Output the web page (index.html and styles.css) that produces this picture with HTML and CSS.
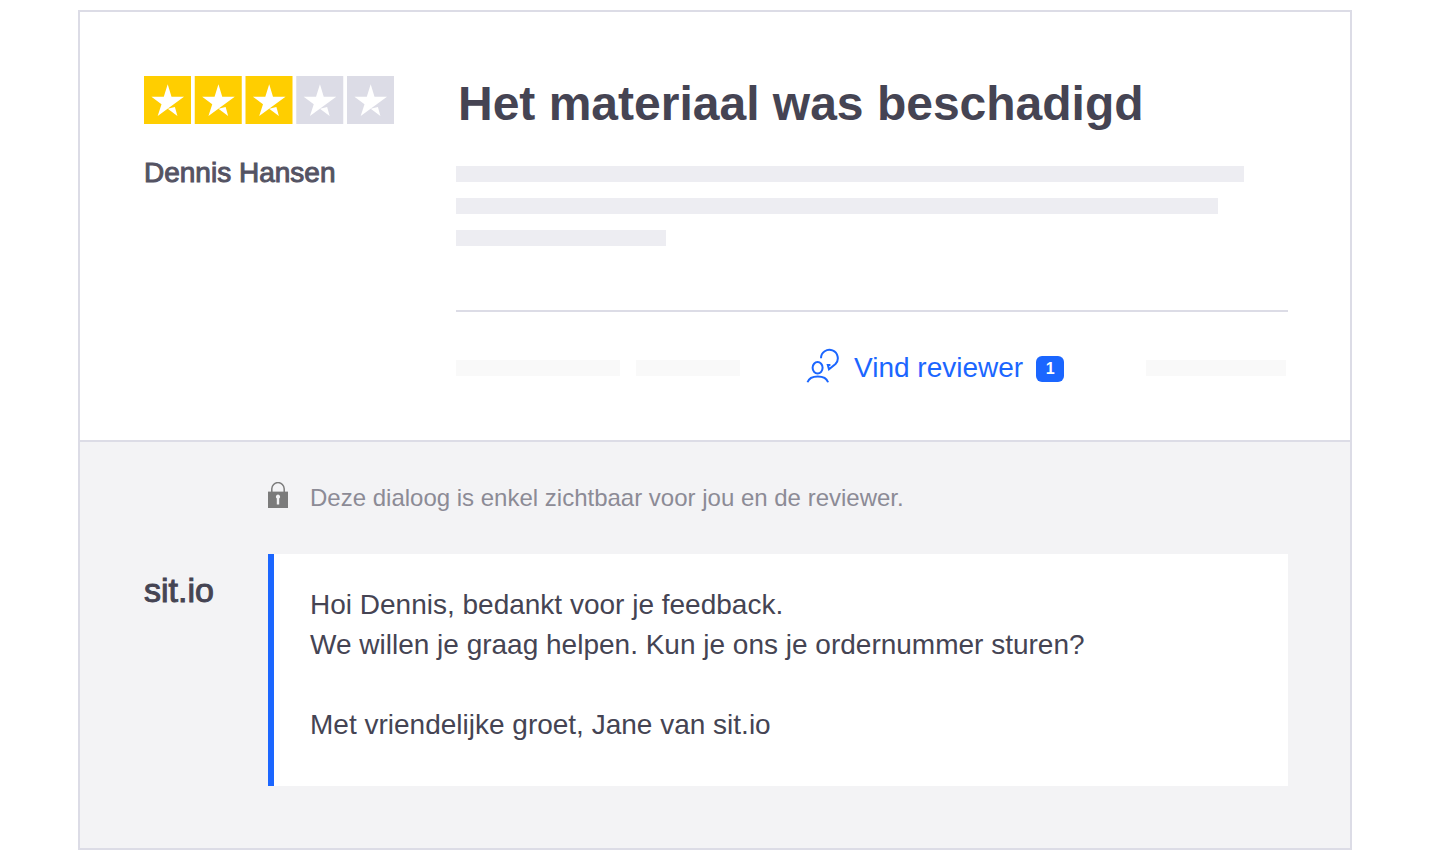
FILE: index.html
```html
<!DOCTYPE html>
<html lang="nl">
<head>
<meta charset="utf-8">
<meta name="viewport" content="width=device-width, initial-scale=1">
<title>Vind reviewer</title>
<link rel="stylesheet" href="styles.css">
</head>
<body>
<main class="card">
  <article class="review">
    <div class="reviewer">
      <svg class="stars" viewBox="0 0 250 48" role="img" aria-label="3 van 5 sterren">
        <defs>
          <g id="star">
            <path d="M0 0H47V48H0Z"/>
            <path fill="#fff" d="M23.7 8.3L27.5 20.7H40L13.7 40L17.5 28.2L7.4 20.7H19.8Z"/>
            <path fill="#fff" d="M23.7 32.7L30.9 31L33.4 40Z"/>
          </g>
        </defs>
        <g fill="#ffce00">
          <use href="#star"/>
          <use href="#star" x="50.75"/>
          <use href="#star" x="101.5"/>
        </g>
        <g fill="#dcdce6">
          <use href="#star" x="152.25"/>
          <use href="#star" x="203"/>
        </g>
      </svg>
      <p class="name">Dennis Hansen</p>
    </div>
    <div class="content">
      <h1 class="title">Het materiaal was beschadigd</h1>
      <div class="lines">
        <span class="line line-long"></span>
        <span class="line line-medium"></span>
        <span class="line line-short"></span>
      </div>
      <div class="actions">
        <span class="stub stub-large"></span>
        <span class="stub stub-small"></span>
        <a class="find" href="#dialoog">
          <svg class="find-icon" viewBox="0 0 34 36" aria-hidden="true">
            <g fill="none" stroke="#1b66ff" stroke-width="2">
              <ellipse cx="11.6" cy="19.8" rx="5" ry="5.7"/>
              <path d="M1.5 34.2C2.8 30.4 7 28.4 11.8 28.4S20.8 30.4 22.1 34.2"/>
              <path d="M15 10.2A8.4 8.4 0 1 1 29.5 16L23 21.2L21.8 17H24.4"/>
            </g>
          </svg>
          <span>Vind reviewer</span>
          <span class="badge">1</span>
        </a>
        <span class="stub stub-end"></span>
      </div>
    </div>
  </article>
  <section class="dialog" id="dialoog">
    <p class="notice">
      <svg class="lock" viewBox="0 0 20 26" aria-hidden="true">
        <path fill="none" stroke="#7b7b7b" stroke-width="1.5" d="M3.8 10V6.8A6.2 6.2 0 0 1 16.2 6.8V10"/>
        <path fill="#7b7b7b" d="M0 9.6H20V26H0Z"/>
        <path fill="#f3f3f5" d="M10 12.6A2.2 2.2 0 0 1 11.2 16.6V22.6H8.8V16.6A2.2 2.2 0 0 1 10 12.6Z"/>
      </svg>
      <span>Deze dialoog is enkel zichtbaar voor jou en de reviewer.</span>
    </p>
    <h2 class="company">sit.io</h2>
    <div class="message">
      <p>Hoi Dennis, bedankt voor je feedback.<br>We willen je graag helpen. Kun je ons je ordernummer sturen?</p>
      <p>Met vriendelijke groet, Jane van sit.io</p>
    </div>
  </section>
</main>
</body>
</html>
```
FILE: styles.css
```css
* {
  box-sizing: border-box;
}

body {
  margin: 0;
  padding: 10px 78px 14px;
  background: #fff;
  color: #454453;
  font-family: "Liberation Sans", Arial, sans-serif;
  font-size: 28px;
  line-height: 40px;
}

h1, h2, p {
  margin: 0;
}

.card {
  border: 2px solid #dcdce6;
}

.review {
  display: grid;
  grid-template-columns: 312px 1fr;
  padding: 64px 62px 52px 64px;
  border-bottom: 2px solid #dcdce6;
}

.stars {
  display: block;
  width: 250px;
  height: 48px;
}

.name {
  margin-top: 29px;
  color: #545363;
  -webkit-text-stroke: 1px;
}

.title {
  padding-left: 2px;
  font-size: 48px;
  line-height: 56px;
}

.lines {
  display: grid;
  gap: 16px;
  margin-top: 34px;
  padding-bottom: 64px;
  border-bottom: 2px solid #dcdce6;
}

.line {
  height: 16px;
  background: #ededf2;
}

.line-long {
  width: 788px;
}

.line-medium {
  width: 762px;
}

.line-short {
  width: 210px;
}

.actions {
  display: flex;
  align-items: center;
  margin-top: 36px;
}

.stub {
  height: 16px;
  background: #f9f9f9;
}

.stub-large {
  width: 164px;
}

.stub-small {
  width: 104px;
  margin-left: 16px;
}

.stub-end {
  width: 140px;
  margin: 0 2px 0 auto;
}

.find {
  display: flex;
  align-items: center;
  margin-left: 66px;
  color: #1b66ff;
  text-decoration: none;
}

.find-icon {
  width: 34px;
  height: 36px;
  margin: 0 14px 4px 0;
}

.badge {
  width: 28px;
  height: 26px;
  margin: 2px 0 0 13px;
  border-radius: 6px;
  background: #1b66ff;
  color: #fff;
  font-size: 16px;
  font-weight: bold;
  line-height: 26px;
  text-align: center;
}

.dialog {
  display: grid;
  grid-template-columns: 124px 1fr;
  padding: 36px 62px 62px 64px;
  background: #f3f3f5;
}

.notice {
  display: flex;
  grid-column: 2;
  align-items: center;
  gap: 22px;
  color: #8c8b96;
  font-size: 24px;
}

.lock {
  width: 20px;
  height: 26px;
  margin-bottom: 6px;
}

.company {
  grid-column: 1;
  margin-top: 52px;
  font-size: 34px;
  font-weight: normal;
  -webkit-text-stroke: 1px;
}

.message {
  display: grid;
  gap: 40px;
  margin-top: 36px;
  padding: 31px 36px 41px;
  border-left: 6px solid #1b66ff;
  background: #fff;
}
```
